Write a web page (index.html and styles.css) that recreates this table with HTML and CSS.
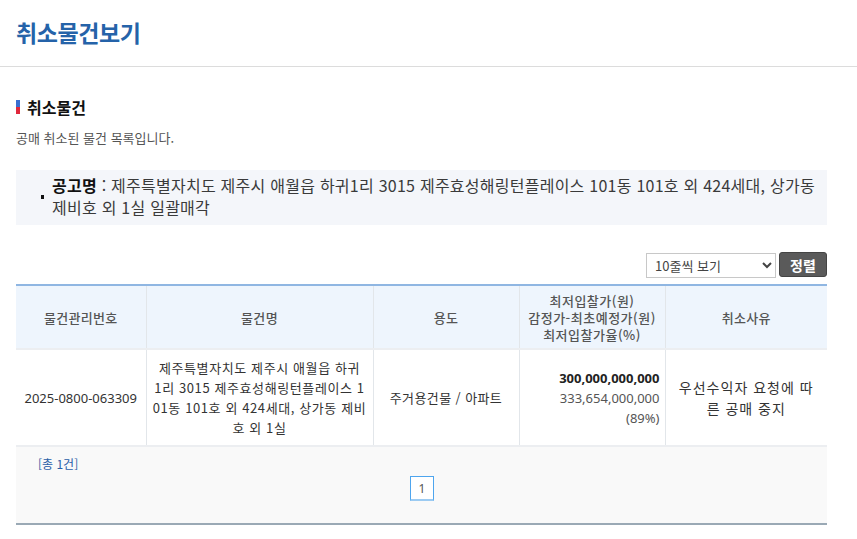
FILE: index.html
```html
<!DOCTYPE html>
<html lang="ko">
<head>
<meta charset="utf-8">
<title>취소물건보기</title>
<link rel="stylesheet" href="styles.css">
</head>
<body>
<header class="page-head">
  <h1 class="page-title">취소물건보기</h1>
</header>
<main class="content">
  <h2 class="sec-title"><span class="sec-mark"></span>취소물건</h2>
  <p class="sec-desc">공매 취소된 물건 목록입니다.</p>
  <div class="notice">
    <span class="notice-bullet"></span>
    <p class="notice-text"><strong>공고명</strong> : 제주특별자치도 제주시 애월읍 하귀1리 3015 제주효성해링턴플레이스 101동 101호 외 424세대, 상가동 제비호 외 1실 일괄매각</p>
  </div>
  <div class="controls">
    <select class="rows-select">
      <option>10줄씩 보기</option>
    </select>
    <button class="sort-btn" type="button">정렬</button>
  </div>
  <table class="list">
    <colgroup>
      <col class="c1"><col class="c2"><col class="c3"><col class="c4"><col class="c5">
    </colgroup>
    <thead>
      <tr>
        <th>물건관리번호</th>
        <th>물건명</th>
        <th>용도</th>
        <th class="multi">최저입찰가(원)<br>감정가-최초예정가(원)<br>최저입찰가율(%)</th>
        <th>취소사유</th>
      </tr>
    </thead>
    <tbody>
      <tr>
        <td>2025-0800-063309</td>
        <td class="name">제주특별자치도 제주시 애월읍 하귀<br>1리 3015 제주효성해링턴플레이스 1<br>01동 101호 외 424세대, 상가동 제비<br>호 외 1실</td>
        <td class="use">주거용건물 / 아파트</td>
        <td class="price"><strong>300,000,000,000</strong><br>333,654,000,000<br>(89%)</td>
        <td class="reason">우선수익자 요청에 따른 공매 중지</td>
      </tr>
    </tbody>
  </table>
  <div class="list-foot">
    <p class="total">[총 1건]</p>
    <div class="pager"><span class="page-num">1</span></div>
  </div>
</main>
</body>
</html>
```
FILE: styles.css
```css
* { box-sizing: border-box; }
body {
  margin: 0;
  font-family: "Noto Sans", "Noto Sans CJK KR", sans-serif;
  color: #333;
  background: #fff;
}
.page-head {
  height: 67px;
  border-bottom: 1px solid #dcdcdc;
  padding: 0 16px;
  display: flex;
  align-items: center;
}
.page-title {
  margin: 0;
  font-family: "Noto Sans CJK KR", sans-serif;
  font-size: 23px;
  font-weight: 700;
  color: #2563a9;
  letter-spacing: -0.4px;
  line-height: 1;
  padding-bottom: 1px;
}
.content {
  width: 811px;
  margin-left: 16px;
}
.sec-title {
  margin: 29px 0 0;
  display: flex;
  align-items: center;
  gap: 7px;
  font-family: "Noto Sans CJK KR", sans-serif;
  font-size: 16px;
  font-weight: 700;
  color: #111;
  line-height: 22px;
}
.sec-mark {
  width: 4px;
  height: 14px;
  background: linear-gradient(#3a6fd0 0 50%, #e0283c 50% 100%);
}
.sec-desc {
  margin: 10px 0 0;
  font-family: "Noto Sans CJK KR", sans-serif;
  font-size: 13px;
  color: #555;
  line-height: 20px;
}
.notice {
  position: relative;
  margin-top: 22px;
  background: #f4f6fa;
  padding: 4px 1px 6px 36px;
  min-height: 55px;
}
.notice-bullet {
  position: absolute;
  left: 25px;
  top: 25px;
  width: 3px;
  height: 4px;
  background: #111;
}
.notice-text {
  margin: 0;
  font-family: "Noto Sans CJK KR", sans-serif;
  font-size: 16px;
  line-height: 22px;
  color: #3a3a3a;
  letter-spacing: 0.25px;
  word-break: keep-all;
}
.notice-text strong { color: #111; font-weight: 700; }
.controls {
  margin-top: 27px;
  display: flex;
  justify-content: flex-end;
  align-items: flex-start;
  gap: 3px;
}
.rows-select {
  width: 130px;
  height: 25px;
  margin-top: 1px;
  border: 1px solid #c8c8c8;
  border-radius: 0;
  background: #fff;
  font-family: "Noto Sans CJK KR", sans-serif;
  font-size: 13px;
  color: #444;
  padding: 0 4px;
}
.sort-btn {
  width: 48px;
  height: 25px;
  border: 1px solid #444;
  border-radius: 3px;
  background: #5a5a5a;
  color: #fff;
  font-family: "Noto Sans CJK KR", sans-serif;
  font-size: 14px;
  font-weight: 700;
  padding: 0;
  line-height: 1;
}
.list {
  margin-top: 6px;
  width: 811px;
  border-collapse: collapse;
  table-layout: fixed;
  border-top: 2px solid #8fb6e2;
}
.c1 { width: 130px; }
.c2 { width: 227px; }
.c3 { width: 146px; }
.c4 { width: 146px; }
.c5 { width: 162px; }
.list th {
  height: 64px;
  background: #eef5fd;
  font-family: "Noto Sans CJK KR", sans-serif;
  font-size: 13px;
  font-weight: 500;
  color: #555;
  line-height: 17px;
  letter-spacing: 0.3px;
  border-left: 1px solid #e2e6ea;
  border-bottom: 2px solid #eceef1;
  padding: 0 2px;
}
.list th.multi { letter-spacing: 0.5px; }
.list th:first-child, .list td:first-child { border-left: 0; }
.list td {
  height: 97px;
  text-align: center;
  font-size: 13px;
  color: #333;
  line-height: 20px;
  border-left: 1px solid #e2e6ea;
  border-bottom: 2px solid #eceef1;
  padding: 0 5px;
}
.list td.name {
  white-space: nowrap;
  padding: 0 4px;
  font-family: "Noto Sans CJK KR", sans-serif;
  letter-spacing: 0.6px;
}
.list td.use {
  font-family: "Noto Sans CJK KR", sans-serif;
  letter-spacing: 0.4px;
}
.list td.price {
  text-align: right;
  padding-right: 5px;
  color: #555;
}
.list td.price strong { color: #222; font-weight: 700; }
.list td.reason {
  font-family: "Noto Sans CJK KR", sans-serif;
  font-size: 14px;
  line-height: 21px;
  letter-spacing: 1px;
  padding: 0 8px;
}
.list-foot {
  background: #f9f9f9;
  height: 78px;
  border-bottom: 2px solid #9aa9b5;
  padding: 9px 22px 0;
}
.total {
  margin: 0;
  font-family: "Noto Sans CJK KR", sans-serif;
  font-size: 12px;
  color: #2a5ea8;
  line-height: 16px;
}
.pager {
  display: flex;
  justify-content: center;
  margin-top: 4px;
}
.page-num {
  width: 24px;
  height: 25px;
  border: 1px solid #4ea5ee;
  border-bottom: 2px solid #9ccbf2;
  background: #fff;
  font-size: 12px;
  color: #555;
  display: flex;
  align-items: center;
  justify-content: center;
  margin-left: 1px;
}
```
